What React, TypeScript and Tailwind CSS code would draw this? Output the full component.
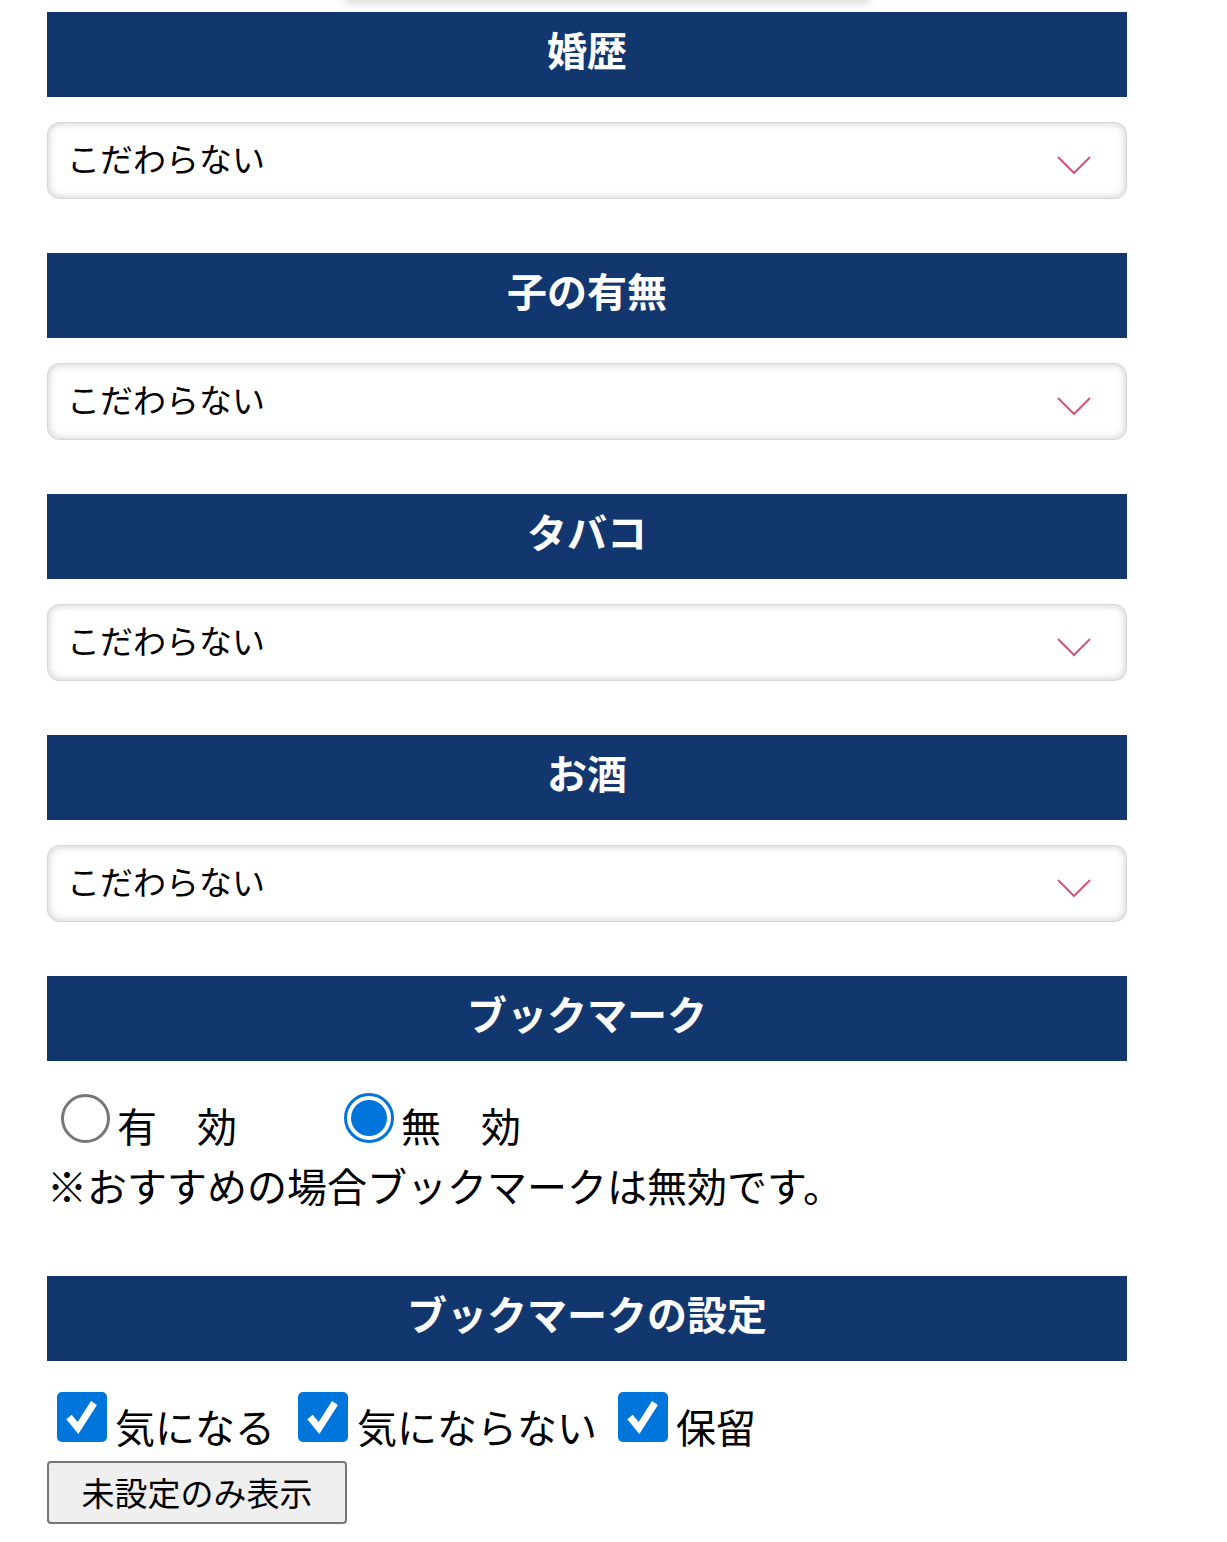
import React from 'react';

const jp = { fontFamily: '"Noto Sans CJK JP", "Noto Sans", sans-serif' };

function Header({ title }: { title: string }) {
  return (
    <div className="h-[85px] bg-[#12376f] flex items-center justify-center pb-[12px]">
      <span className="text-white text-[40px] font-bold leading-none">{title}</span>
    </div>
  );
}

function Select({ value }: { value: string }) {
  return (
    <div className="mt-[25px] h-[77px] rounded-[12px] border border-[#d6d6d6] bg-white shadow-[inset_0_0_9px_rgba(0,0,0,0.22)] flex items-center justify-between pl-[19px] pr-[35px]">
      <span className="text-[33px] text-black leading-none -mt-[4px]">{value}</span>
      <svg width="34" height="20" viewBox="0 0 34 20" className="mt-[8px] shrink-0">
        <path d="M1 2 L17 18 L33 2" fill="none" stroke="#d4547a" strokeWidth="2" />
      </svg>
    </div>
  );
}

function Radio({ checked }: { checked: boolean }) {
  return checked ? (
    <span className="block shrink-0 w-[50px] h-[50px] rounded-full border-[3px] border-[#0075db] bg-white p-[4px]">
      <span className="block w-full h-full rounded-full bg-[#0075db]" />
    </span>
  ) : (
    <span className="block shrink-0 w-[49px] h-[49px] rounded-full border-[3px] border-[#767676] bg-white" />
  );
}

function Check() {
  return (
    <span className="flex shrink-0 w-[50px] h-[50px] rounded-[5px] bg-[#0075db] items-center justify-center">
      <svg width="38" height="38" viewBox="0 0 38 38">
        <path d="M6 19 L15 30 L31 5" fill="none" stroke="white" strokeWidth="7" strokeLinejoin="miter" />
      </svg>
    </span>
  );
}

export default function App() {
  const selects = ['婚歴', '子の有無', 'タバコ', 'お酒'];
  return (
    <div className="relative w-[1227px] min-h-[1542px] bg-white overflow-hidden" style={jp}>
      <div className="absolute top-[-40px] left-[345px] w-[525px] h-[40px] bg-white shadow-[0_3px_9px_rgba(60,80,70,0.22)]" />
      <div className="ml-[47px] w-[1080px] pt-[12px]">
        {selects.map((t, i) => (
          <div key={t} className={i === 0 ? '' : 'mt-[54px]'}>
            <Header title={t} />
            <Select value="こだわらない" />
          </div>
        ))}

        <div className="mt-[54px]">
          <Header title="ブックマーク" />
        </div>
        <div className="mt-[34px] text-[40px] leading-[60px] text-black">
          <div className="flex items-center">
            <span className="ml-[14px] -mt-[14px]"><Radio checked={false} /></span>
            <span className="ml-[7px]">有　効</span>
            <span className="ml-[107px] -mt-[14px]"><Radio checked /></span>
            <span className="ml-[7px]">無　効</span>
          </div>
          <div>※おすすめの場合ブックマークは無効です。</div>
        </div>

        <div className="mt-[61px]">
          <Header title="ブックマークの設定" />
        </div>
        <div className="mt-[35px] flex items-center text-[40px] leading-[60px] text-black">
          <span className="ml-[10px] -mt-[18px]"><Check /></span>
          <span className="ml-[8px]">気になる</span>
          <span className="ml-[23px] -mt-[18px]"><Check /></span>
          <span className="ml-[9px]">気にならない</span>
          <span className="ml-[21px] -mt-[18px]"><Check /></span>
          <span className="ml-[8px]">保留</span>
        </div>
        <button className="mt-[5px] w-[300px] h-[63px] bg-[#efefef] border-2 border-[#767676] rounded-[4px] text-[33px] text-black leading-none">
          未設定のみ表示
        </button>
      </div>
    </div>
  );
}
